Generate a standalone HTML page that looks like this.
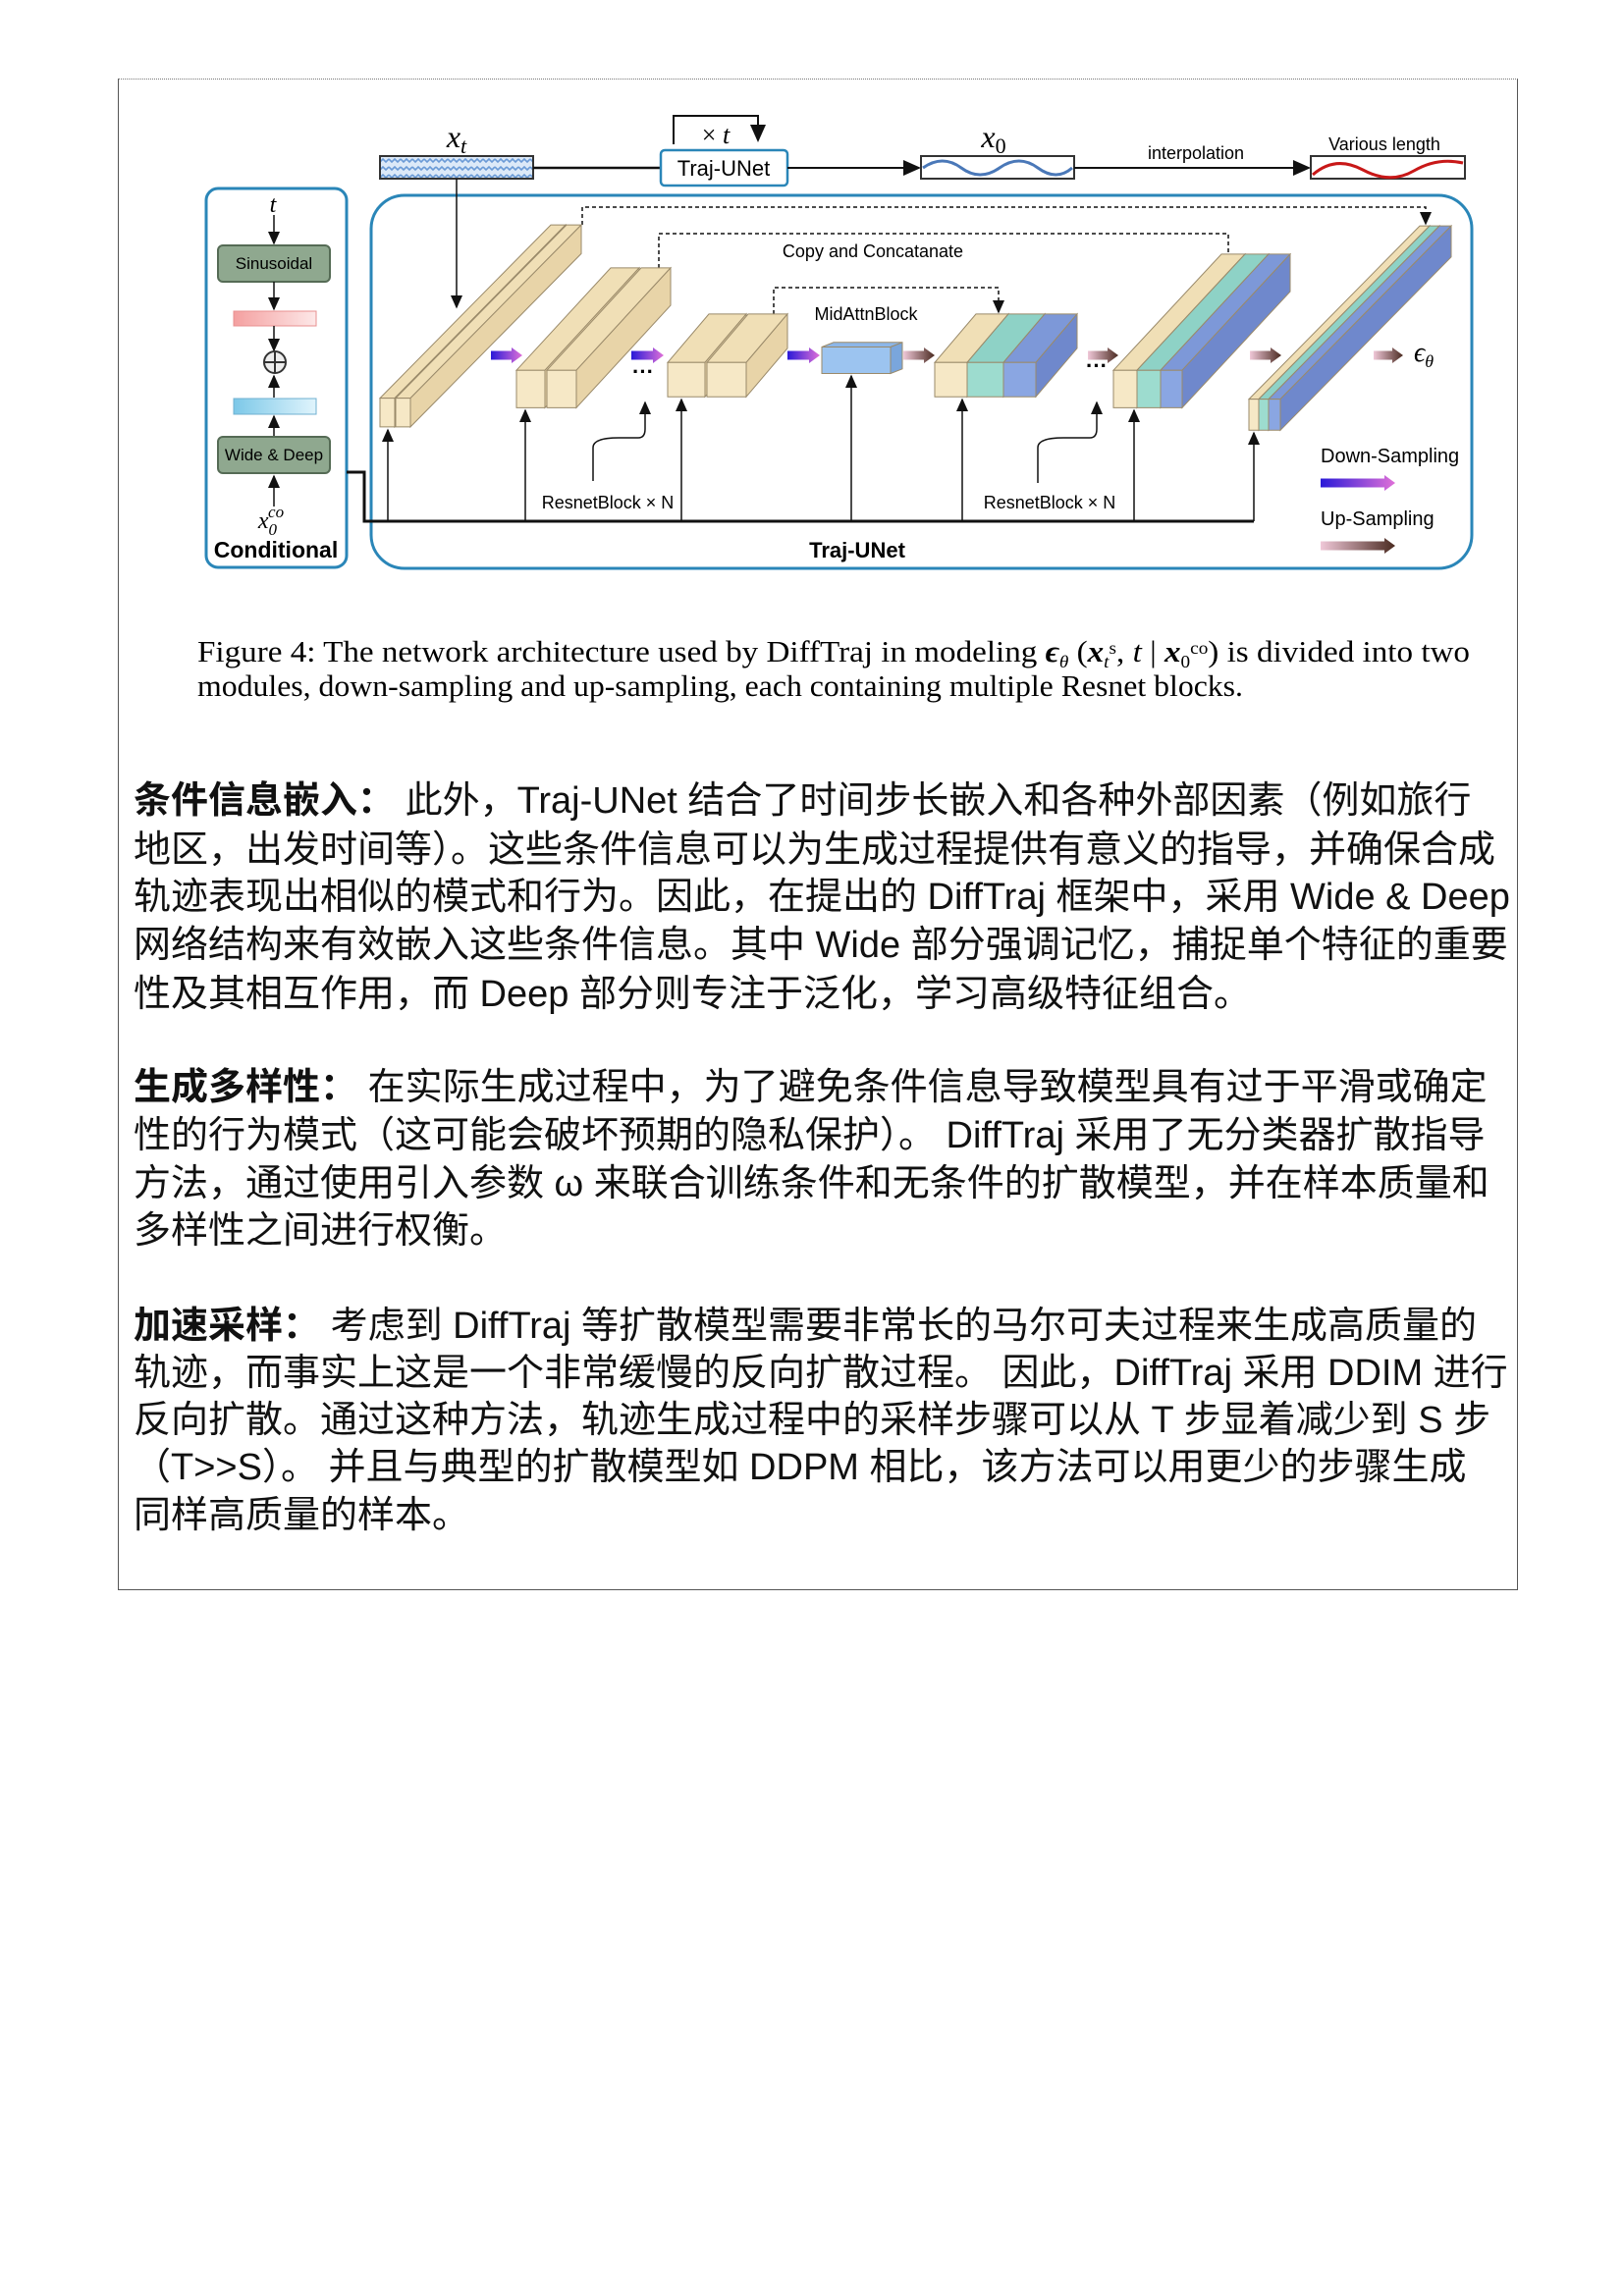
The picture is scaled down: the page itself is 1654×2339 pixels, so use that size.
<!DOCTYPE html>
<html><head><meta charset="utf-8">
<style>
html,body{margin:0;padding:0;background:#fff;}
body{width:1654px;height:2339px;position:relative;overflow:hidden;}
#frame{position:absolute;left:120px;top:80px;width:1424px;height:1538px;border-left:1px solid #555;border-right:1px solid #555;border-bottom:1px solid #555;border-top:1px dotted #777;}
.ln{position:absolute;left:136px;white-space:nowrap;font-family:"Liberation Sans","Noto Sans CJK SC",sans-serif;font-size:38px;color:#111;line-height:40px;}
b{font-weight:bold;}
svg{position:absolute;left:0;top:0;}
</style></head><body>
<div id="frame"></div>
<svg id="dg" width="1654" height="760" viewBox="0 0 1654 760" font-family="Liberation Sans, sans-serif">
<defs>
<linearGradient id="dn" x1="0" x2="1"><stop offset="0" stop-color="#2a1ad8"/><stop offset="1" stop-color="#e070d8"/></linearGradient>
<linearGradient id="up" x1="0" x2="1"><stop offset="0" stop-color="#f0c8d8"/><stop offset="1" stop-color="#4a2a20"/></linearGradient>
<linearGradient id="pk" x1="0" x2="1"><stop offset="0" stop-color="#f4a0a0"/><stop offset="1" stop-color="#fde8e8"/></linearGradient>
<linearGradient id="bl" x1="0" x2="1"><stop offset="0" stop-color="#7cc8e8"/><stop offset="1" stop-color="#e0f4fc"/></linearGradient>
<pattern id="nz" width="12" height="8" patternUnits="userSpaceOnUse"><rect width="12" height="8" fill="#dce9f8"/><path d="M0 2 l3 3 l3 -3 l3 3 l3 -3" stroke="#6a9ad6" stroke-width="1.6" fill="none"/></pattern>
<marker id="ah" markerWidth="10" markerHeight="10" refX="8" refY="5" orient="auto"><path d="M0 1 L9 5 L0 9 Z" fill="#111"/></marker>
</defs>
<text x="465" y="150" font-family="Liberation Serif, serif" font-style="italic" font-size="32" text-anchor="middle">x<tspan font-size="22" dy="6">t</tspan></text>
<rect x="387" y="159" width="156" height="23" fill="url(#nz)" stroke="#333" stroke-width="2"/>
<line x1="543" y1="171" x2="673" y2="171" stroke="#111" stroke-width="2.5"/>
<path d="M686 147 V118 H772 V143" fill="none" stroke="#111" stroke-width="2" marker-end="url(#ah)"/>
<text x="729" y="146" font-family="Liberation Serif, serif" font-size="26" text-anchor="middle">× <tspan font-style="italic">t</tspan></text>
<rect x="673" y="153" width="129" height="36" rx="4" fill="#fff" stroke="#2a86b8" stroke-width="2.5"/>
<text x="737" y="179" font-size="22" text-anchor="middle">Traj-UNet</text>
<line x1="802" y1="171" x2="936" y2="171" stroke="#111" stroke-width="2" marker-end="url(#ah)"/>
<text x="1012" y="150" font-family="Liberation Serif, serif" font-style="italic" font-size="32" text-anchor="middle">x<tspan font-size="22" dy="6" font-style="normal">0</tspan></text>
<rect x="938" y="159" width="156" height="23" fill="#fff" stroke="#333" stroke-width="2"/>
<path d="M940 171 Q960 157 979 171 T1018 171 T1057 171 T1092 171" fill="none" stroke="#4a78b8" stroke-width="3"/>
<line x1="1094" y1="171" x2="1333" y2="171" stroke="#111" stroke-width="2" marker-end="url(#ah)"/>
<text x="1218" y="162" font-size="18" text-anchor="middle">interpolation</text>
<text x="1410" y="153" font-size="18" text-anchor="middle">Various length</text>
<rect x="1335" y="159" width="157" height="23" fill="#fff" stroke="#333" stroke-width="2"/>
<path d="M1337 178 Q1360 158 1388 173 T1440 174 T1490 166" fill="none" stroke="#c81818" stroke-width="3"/>
<rect x="210" y="192" width="143" height="386" rx="12" fill="none" stroke="#2a86b8" stroke-width="3"/>
<text x="278" y="216" font-family="Liberation Serif, serif" font-style="italic" font-size="24" text-anchor="middle">t</text>
<line x1="279" y1="219" x2="279" y2="248" stroke="#111" stroke-width="1.5" marker-end="url(#ah)"/>
<rect x="222" y="250" width="114" height="37" rx="5" fill="#8fa88f" stroke="#556b55" stroke-width="2"/>
<text x="279" y="274" font-size="17" text-anchor="middle">Sinusoidal</text>
<line x1="279" y1="287" x2="279" y2="315" stroke="#111" stroke-width="1.5" marker-end="url(#ah)"/>
<rect x="238" y="317" width="84" height="15" fill="url(#pk)" stroke="#e89090"/>
<line x1="279" y1="332" x2="279" y2="357" stroke="#111" stroke-width="1.5" marker-end="url(#ah)"/>
<circle cx="280" cy="369" r="11" fill="#eee" stroke="#333" stroke-width="2"/>
<path d="M269 369 H291 M280 358 V380" stroke="#333" stroke-width="2"/>
<line x1="279" y1="405" x2="279" y2="383" stroke="#111" stroke-width="1.5" marker-end="url(#ah)"/>
<rect x="238" y="406" width="84" height="16" fill="url(#bl)" stroke="#70b0d0"/>
<line x1="279" y1="444" x2="279" y2="424" stroke="#111" stroke-width="1.5" marker-end="url(#ah)"/>
<rect x="222" y="445" width="114" height="37" rx="5" fill="#8fa88f" stroke="#556b55" stroke-width="2"/>
<text x="279" y="469" font-size="17" text-anchor="middle">Wide &amp; Deep</text>
<line x1="279" y1="516" x2="279" y2="485" stroke="#111" stroke-width="1.5" marker-end="url(#ah)"/>
<text x="276" y="538" font-family="Liberation Serif, serif" font-style="italic" font-size="24" text-anchor="middle">x<tspan font-size="17" dy="7">0</tspan><tspan font-size="17" dx="-9" dy="-18">co</tspan></text>
<text x="281" y="568" font-size="23" font-weight="bold" text-anchor="middle">Conditional</text>
<rect x="378" y="199" width="1121" height="380" rx="34" fill="none" stroke="#2a86b8" stroke-width="3"/>
<text x="873" y="568" font-size="22" font-weight="bold" text-anchor="middle">Traj-UNet</text>
<path d="M353 481 H371 V531 H1277" fill="none" stroke="#111" stroke-width="3"/>
<g stroke="#111" stroke-width="1.5" marker-end="url(#ah)">
<line x1="395" y1="531" x2="395" y2="438"/><line x1="535" y1="531" x2="535" y2="418"/>
<line x1="694" y1="531" x2="694" y2="407"/><line x1="867" y1="531" x2="867" y2="383"/>
<line x1="980" y1="531" x2="980" y2="407"/><line x1="1155" y1="531" x2="1155" y2="418"/>
<line x1="1277" y1="531" x2="1277" y2="441"/>
<line x1="465" y1="182" x2="465" y2="313"/>
<path d="M604 490 V456 Q604 446 630 446 H650 Q657 446 657 437 V410" fill="none"/>
<path d="M1057 492 V456 Q1057 446 1083 446 H1110 Q1117 446 1117 437 V410" fill="none"/>
<path d="M593 229 V211 H1452 V228" fill="none" stroke-dasharray="4 3"/>
<path d="M671 273 V238 H1251 V272" fill="none" stroke-dasharray="4 3"/>
<path d="M788 320 V293 H1017 V318" fill="none" stroke-dasharray="4 3"/>
</g>
<text x="889" y="262" font-size="18" text-anchor="middle">Copy and Concatanate</text>
<text x="882" y="326" font-size="18" text-anchor="middle">MidAttnBlock</text>
<text x="619" y="518" font-size="18" text-anchor="middle">ResnetBlock × N</text>
<text x="1069" y="518" font-size="18" text-anchor="middle">ResnetBlock × N</text>
<text x="655" y="386" font-size="22" font-weight="bold" text-anchor="middle">···</text>
<text x="1117" y="380" font-size="22" font-weight="bold" text-anchor="middle">···</text>
<g id="blocks"></g>
<g id="arrs"></g>
<text x="1440" y="368" font-family="Liberation Serif, serif" font-style="italic" font-size="28">ϵ<tspan font-size="18" dy="6">θ</tspan></text>
<text x="1345" y="471" font-size="20">Down-Sampling</text>
<text x="1345" y="535" font-size="20">Up-Sampling</text>
<text x="201" y="674" font-family="Liberation Serif, serif" font-size="31" textLength="1296" lengthAdjust="spacingAndGlyphs">Figure 4: The network architecture used by DiffTraj in modeling <tspan font-weight="bold" font-style="italic">ϵ</tspan><tspan font-size="18" dy="6" font-style="italic">θ</tspan><tspan dy="-6"> (</tspan><tspan font-weight="bold" font-style="italic">x</tspan><tspan font-size="18" dy="6" font-style="italic">t</tspan><tspan font-size="18" dy="-14">s</tspan><tspan dy="8">, </tspan><tspan font-style="italic">t</tspan> | <tspan font-weight="bold" font-style="italic">x</tspan><tspan font-size="18" dy="6">0</tspan><tspan font-size="18" dy="-14">co</tspan><tspan dy="8">) is divided into two</tspan></text>
<text x="201" y="709" font-family="Liberation Serif, serif" font-size="31" textLength="1065" lengthAdjust="spacingAndGlyphs">modules, down-sampling and up-sampling, each containing multiple Resnet blocks.</text>
</svg>
<script>
var NS="http://www.w3.org/2000/svg",g=document.getElementById("blocks"),a=document.getElementById("arrs");
var Y=["#f6e8c6","#e8d4a8","#f0dfb6"],T=["#9ddccf","#78c0b4","#8ed2c6"],B=["#8aa6e2","#6f88cc","#7d98d8"],M=["#9cc4f0","#7aa6dc","#8cb6e8"];
function p(pts,fill){var e=document.createElementNS(NS,"polygon");e.setAttribute("points",pts.map(function(q){return q.join(",")}).join(" "));e.setAttribute("fill",fill);e.setAttribute("stroke","#9a8a6a");e.setAttribute("stroke-width","1");g.appendChild(e);}
function slab(x,y,w,h,dx,dy,c){p([[x,y],[x+dx,y+dy],[x+w+dx,y+dy],[x+w,y]],c[2]);p([[x+w,y],[x+w+dx,y+dy],[x+w+dx,y+h+dy],[x+w,y+h]],c[1]);p([[x,y],[x+w,y],[x+w,y+h],[x,y+h]],c[0]);}
function blk(y,h,dx,dy,s){s.forEach(function(q){slab(q[0],y,q[1],h,dx,dy,q[2]);});}
blk(405.6,29.3,174,-176.5,[[387,15,Y],[403,15,Y]]);
blk(377.2,38.2,96,-104.3,[[526,29,Y],[557,30,Y]]);
blk(369.3,34.9,42,-49.4,[[680,38,Y],[720,40,Y]]);
blk(353.5,27,12,-4.7,[[837,70,M]]);
blk(369.3,34.9,42,-49.4,[[952,33,Y],[985,37,T],[1022,33,B]]);
blk(377.2,38.2,110,-118.3,[[1134,24,Y],[1158,24,T],[1182,22,B]]);
blk(406.6,31.7,174,-176.5,[[1272,10,Y],[1282,10,T],[1292,12,B]]);
function ar(x1,x2,y,f){var e=document.createElementNS(NS,"path");e.setAttribute("d","M"+x1+" "+(y-4.5)+" H"+(x2-11)+" V"+(y-8)+" L"+x2+" "+y+" L"+(x2-11)+" "+(y+8)+" V"+(y+4.5)+" H"+x1+" Z");e.setAttribute("fill",f);a.appendChild(e);}
ar(500,532,362,"url(#dn)");ar(643,676,362,"url(#dn)");ar(802,835,362,"url(#dn)");
ar(920,952,362,"url(#up)");ar(1108,1139,362,"url(#up)");ar(1273,1305,362,"url(#up)");ar(1399,1429,362,"url(#up)");
ar(1345,1421,492,"url(#dn)");ar(1345,1421,556,"url(#up)");
</script>
<div class="ln" style="top:796px"><b>条件信息嵌入：</b> 此外，Traj-UNet 结合了时间步长嵌入和各种外部因素（例如旅行</div>
<div class="ln" style="top:846px">地区，出发时间等）。这些条件信息可以为生成过程提供有意义的指导，并确保合成</div>
<div class="ln" style="top:894px">轨迹表现出相似的模式和行为。因此，在提出的 DiffTraj 框架中，采用 Wide &amp; Deep</div>
<div class="ln" style="top:943px">网络结构来有效嵌入这些条件信息。其中 Wide 部分强调记忆，捕捉单个特征的重要</div>
<div class="ln" style="top:993px">性及其相互作用，而 Deep 部分则专注于泛化，学习高级特征组合。</div>
<div class="ln" style="top:1088px"><b>生成多样性：</b> 在实际生成过程中，为了避免条件信息导致模型具有过于平滑或确定</div>
<div class="ln" style="top:1137px">性的行为模式（这可能会破坏预期的隐私保护）。 DiffTraj 采用了无分类器扩散指导</div>
<div class="ln" style="top:1186px">方法，通过使用引入参数 ω 来联合训练条件和无条件的扩散模型，并在样本质量和</div>
<div class="ln" style="top:1234px">多样性之间进行权衡。</div>
<div class="ln" style="top:1331px"><b>加速采样：</b> 考虑到 DiffTraj 等扩散模型需要非常长的马尔可夫过程来生成高质量的</div>
<div class="ln" style="top:1379px">轨迹，而事实上这是一个非常缓慢的反向扩散过程。 因此，DiffTraj 采用 DDIM 进行</div>
<div class="ln" style="top:1427px">反向扩散。通过这种方法，轨迹生成过程中的采样步骤可以从 T 步显着减少到 S 步</div>
<div class="ln" style="top:1475px">（T&gt;&gt;S）。 并且与典型的扩散模型如 DDPM 相比，该方法可以用更少的步骤生成</div>
<div class="ln" style="top:1524px">同样高质量的样本。</div>
</body></html>
